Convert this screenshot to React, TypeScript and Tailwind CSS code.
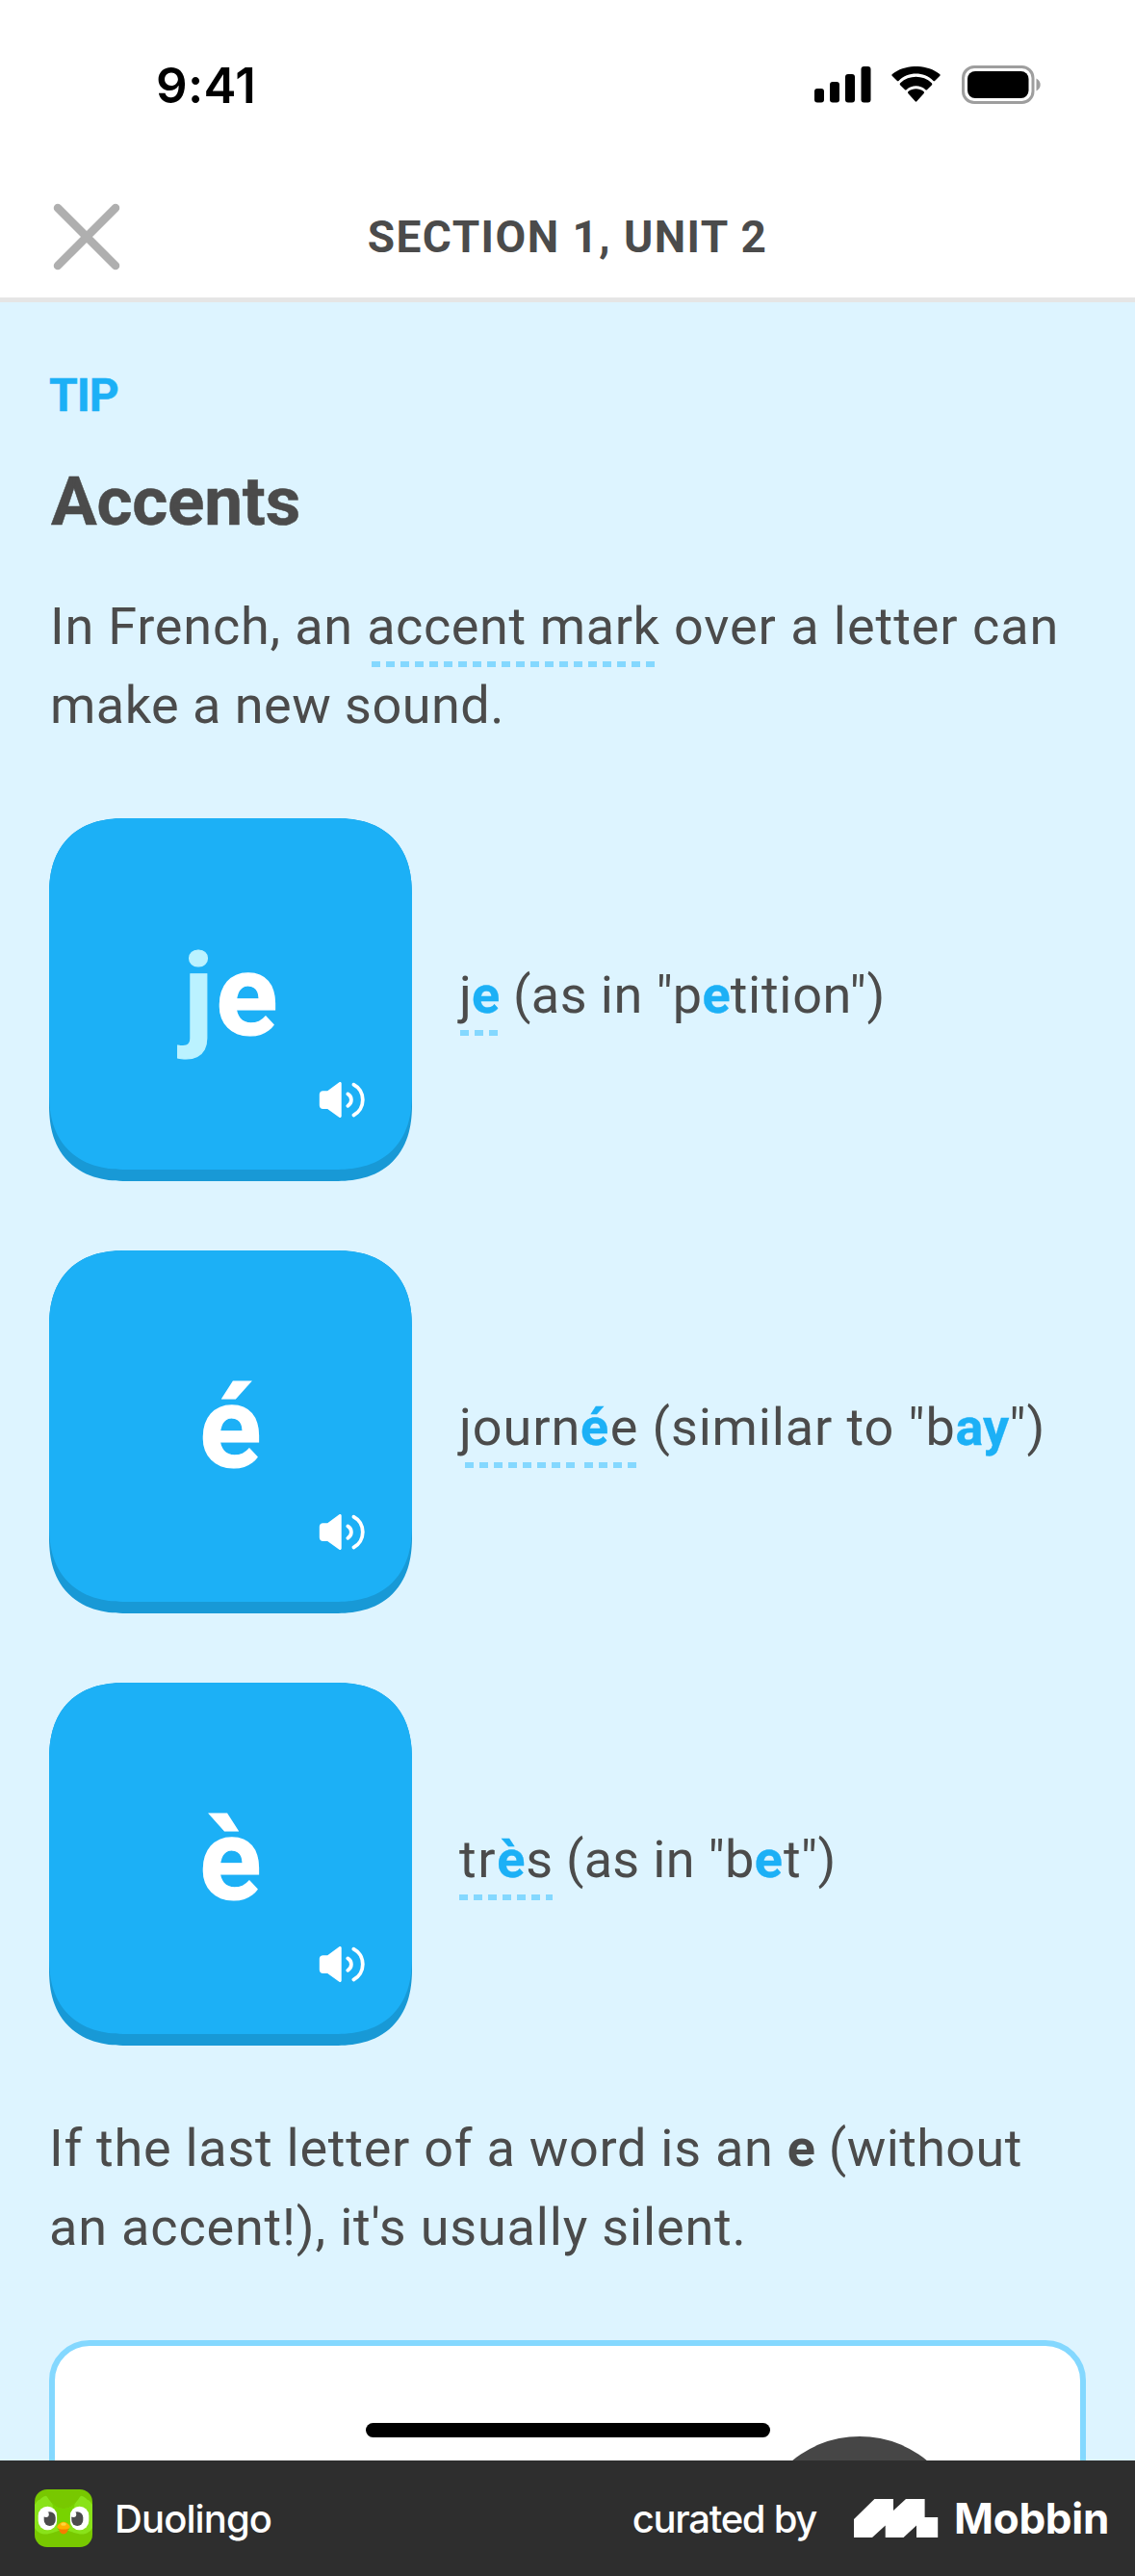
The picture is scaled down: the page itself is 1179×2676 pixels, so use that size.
import type { ReactNode } from "react";

function SignalIcon() {
  return (
    <svg width="59" height="38" viewBox="0 0 59 38" fill="#000">
      <rect x="0" y="23" width="10" height="14.5" rx="3" />
      <rect x="16" y="16" width="10" height="21.5" rx="3" />
      <rect x="32" y="8" width="10" height="29.5" rx="3" />
      <rect x="48.5" y="0" width="10" height="37.5" rx="3" />
    </svg>
  );
}

function WifiIcon() {
  return (
    <svg width="51" height="38" viewBox="0 0 51 38" fill="#000">
      <path d="M25.5 7.6c6.6 0 13 2.500 17.800 7.100a1.400 1.400 0 0 0 2 0l4.800-4.600a1.500 1.500 0 0 0 0-2.200C36.400-2.700 14.600-2.700.9 7.900a1.500 1.500 0 0 0 0 2.200l4.800 4.600a1.400 1.400 0 0 0 2 0C12.500 10.100 18.900 7.600 25.500 7.600z" />
      <path d="M25.500 20.200c3.600 0 7 1.300 9.700 3.700a1.400 1.400 0 0 0 2 0l4.600-4.500a1.500 1.500 0 0 0 0-2.200c-9.300-8.500-23.300-8.500-32.600 0a1.500 1.500 0 0 0 0 2.200l4.600 4.500a1.400 1.400 0 0 0 2 0c2.700-2.400 6.100-3.700 9.700-3.700z" />
      <path d="M33.500 28.200a1.500 1.500 0 0 0 0-2.200c-4.600-3.800-11.400-3.800-16 0a1.500 1.500 0 0 0 0 2.200l7 7.900a1.300 1.300 0 0 0 2 0z" />
    </svg>
  );
}

function BatteryIcon() {
  return (
    <svg width="83" height="40" viewBox="0 0 83 40">
      <rect x="1.500" y="1.500" width="72.500" height="37" rx="11.500" fill="none" stroke="#9e9e9e" strokeWidth="3" />
      <rect x="6" y="6" width="63.500" height="28" rx="8" fill="#000" />
      <path d="M77.500 13.500c2.600 1.200 4.200 3.700 4.200 6.500s-1.600 5.300-4.200 6.500z" fill="#9e9e9e" />
    </svg>
  );
}

function CloseIcon() {
  return (
    <svg width="70" height="70" viewBox="0 0 70 70" stroke="#afafaf" strokeWidth="8.500" strokeLinecap="round">
      <path d="M5 5l60 60M65 5L5 65" />
    </svg>
  );
}

function SpeakerIcon() {
  return (
    <svg width="49" height="40" viewBox="0 0 49 40" fill="none">
      <path
        d="M4.500 10.300h4.700L21.400 1.300c1-.7 2.300-.1 2.300 1.200v34c0 1.300-1.300 1.900-2.300 1.200L9.200 29H4.500C2.300 29 .8 27.500.8 25.300V14c0-2.200 1.500-3.700 3.700-3.700z"
        fill="#fff"
      />
      <path d="M30.300 13.400c2.200 1.300 3.600 3.600 3.600 6.200s-1.400 4.900-3.600 6.200" stroke="#fff" strokeWidth="3.800" strokeLinecap="round" />
      <path d="M36.400 3.700c5.600 2.800 9.400 8.900 9.400 15.900s-3.800 13.100-9.400 15.900" stroke="#fff" strokeWidth="3.800" strokeLinecap="round" />
    </svg>
  );
}

function OwlIcon() {
  return (
    <svg width="60" height="60" viewBox="0 0 60 60">
      <defs>
        <clipPath id="owl-clip">
          <rect width="60" height="60" rx="13" />
        </clipPath>
      </defs>
      <g clipPath="url(#owl-clip)">
        <rect width="60" height="60" fill="#78c800" />
        <path d="M0 16C2 13 3 11 5 11C7 9 9 7 12 6.700C16 11 19 20 30 20C41 20 44 11 48 6.700C51 7 53 9 55 11C57 11 58 13 60 16V40C57 46 50 47.500 45 46C39 45 35 42 30 42C25 42 21 45 15 46C10 47.500 3 46 0 40Z" fill="#89e219" />
        <path d="M18 13C21 18 25 20 30 20s9-2 12-7C40 24 37 30 36 42H24C23 30 20 24 18 13z" fill="#78d300" />
        <rect x="3.700" y="17.800" width="19.400" height="24.500" rx="9.600" fill="#fff" />
        <rect x="36.900" y="17.800" width="19.400" height="24.500" rx="9.600" fill="#fff" />
        <rect x="9.700" y="23.300" width="12" height="14.800" rx="6" fill="#4b4b4b" />
        <rect x="38.300" y="23.300" width="12" height="14.800" rx="6" fill="#4b4b4b" />
        <circle cx="11.800" cy="26" r="3" fill="#fff" />
        <circle cx="40.300" cy="26" r="3" fill="#fff" />
        <path d="M25 39.500h10c0 4-2.200 7-5 7s-5-3-5-7z" fill="#f47d00" />
        <path d="M30 33.700c3 0 6.700 3.400 6.700 5.200 0 2-3.700 2.600-6.700 2.600s-6.700-.6-6.700-2.600c0-1.800 3.700-5.200 6.700-5.200z" fill="#ffb100" />
        <ellipse cx="30" cy="36.200" rx="2.800" ry="1.600" fill="#ffd63c" />
      </g>
    </svg>
  );
}

function MobbinIcon() {
  return (
    <svg width="88" height="40" viewBox="0 0 88 40" fill="#fff">
      <path d="M0 21L21.400 0H41v12L54 0h19.600v19h13.600v21H65V27.500L51.500 40H32.700V27.500L19 40H0z" />
    </svg>
  );
}

/** Text with a row of light blue dashes below it. */
function Hint({ children, dashes, line = "" }: { children: ReactNode; dashes: string[]; line?: string }) {
  return (
    <span className={`relative inline-block ${line}`}>
      {children}
      {dashes.map((place) => (
        <span
          key={place}
          className={`absolute top-[77px] h-1.5 bg-[repeating-linear-gradient(90deg,#84d8ff_0_9px,transparent_9px_15px)] ${place}`}
        />
      ))}
    </span>
  );
}

function Hi({ children, className = "" }: { children: ReactNode; className?: string }) {
  return <b className={`font-bold text-[#1cb0f6] [-webkit-text-stroke:0.300px_currentColor] ${className}`}>{children}</b>;
}

function SoundRow({ letters, children }: { letters: ReactNode; children: ReactNode }) {
  return (
    <div className="flex items-center gap-[49px]">
      <button className="relative flex h-[377px] w-[377px] shrink-0 items-center justify-center rounded-[72px] bg-[#1899d6] supports-[corner-shape:squircle]:rounded-[80px] supports-[corner-shape:squircle]:[corner-shape:superellipse(1.25)]">
        <span className="absolute inset-x-0 top-0 flex h-[365px] items-center justify-center rounded-[72px] bg-[#1cb0f6] pt-[5px] text-[119px] leading-[120px] font-bold text-white [-webkit-text-stroke:1.200px_currentColor] supports-[corner-shape:squircle]:rounded-[80px] supports-[corner-shape:squircle]:[corner-shape:superellipse(1.25)]">
          {letters}
        </span>
        <span className="absolute top-[273px] left-[280px]">
          <SpeakerIcon />
        </span>
      </button>
      <p className="pb-2.5 whitespace-pre">{children}</p>
    </div>
  );
}

export default function App() {
  return (
    <div className="flex h-[2676px] w-[1179px] flex-col overflow-hidden bg-white font-[Roboto,sans-serif] text-[#4b4b4b]">
      <div className="flex h-44 shrink-0 items-center justify-between pr-[97px] pl-[162px]">
        <span className="font-[Inter,sans-serif] text-[51px] leading-none font-semibold tracking-[0.3px] text-black">9:41</span>
        <div className="flex items-center">
          <SignalIcon />
          <span className="ml-[21px]">
            <WifiIcon />
          </span>
          <span className="ml-[22px]">
            <BatteryIcon />
          </span>
        </div>
      </div>

      <header className="grid h-[138px] shrink-0 grid-cols-[125px_1fr_125px] items-center border-b-5 border-[#e5e5e5] pt-[7px]">
        <button className="flex justify-end">
          <CloseIcon />
        </button>
        <h1 className="text-center text-[46px] leading-none font-bold tracking-[1.450px] whitespace-nowrap">SECTION 1, UNIT 2</h1>
      </header>

      <main className="relative h-[2242px] shrink-0 overflow-hidden bg-[#ddf4ff] px-[51px] pt-[73px] text-[54px] leading-[82px]">
        <h2 className="text-[48px] leading-none font-bold tracking-[-1px] text-[#1cb0f6] [-webkit-text-stroke:0.500px_currentColor]">TIP</h2>
        <h3 className="mt-[50px] pl-0.5 text-[71px] leading-[72px] font-bold tracking-[-0.200px] [-webkit-text-stroke:0.500px_currentColor]">Accents</h3>

        <p className="mt-[53px] pl-px whitespace-pre">
          <span className="tracking-[0.800px]">In French, an </span>
          <Hint dashes={["left-[5px] w-[294px]"]} line="tracking-[0.600px]">accent mark</Hint>
          <span className="tracking-[0.950px]"> over a letter can</span>
          <br />
          <span className="tracking-[0.480px]">make a new sound.</span>
        </p>

        <div className="mt-[76px] flex flex-col gap-[72px]">
          <SoundRow
            letters={
              <>
                <span className="tracking-[3px] text-[#bbf2ff]">j</span>e
              </>
            }
          >
            <Hint dashes={["left-px w-[39px]"]}>
              j<Hi>e</Hi>
            </Hint>
            <span className="tracking-[0.450px]"> (as in "p</span>
            <Hi>e</Hi>
            <span className="tracking-[0.700px]">tition")</span>
          </SoundRow>
          <SoundRow letters="é">
            <Hint dashes={["left-1.5 w-[114px]", "left-[130px] w-[54px]"]} line="tracking-[0.900px]">
              journ<Hi className="tracking-[1.500px]">é</Hi>e
            </Hint>
            <span className="tracking-[0.850px]"> (similar to "b</span>
            <Hi>ay</Hi>
            <span className="tracking-[1px]">")</span>
          </SoundRow>
          <SoundRow letters="è">
            <Hint dashes={["left-0 w-[97px]"]}>
              <span className="tracking-[1.600px]">tr</span>
              <Hi className="tracking-[1px]">è</Hi>s
            </Hint>
            <span className="tracking-[0.300px]"> (as in "b</span>
            <Hi className="tracking-[1px]">e</Hi>
            <span className="tracking-[0.300px]">t")</span>
          </SoundRow>
        </div>

        <p className="mt-[66px] whitespace-pre">
          <span className="tracking-[0.740px]">If the last letter of a word is an </span>
          <b>e</b>
          <span className="tracking-[0.400px]"> (without</span>
          <br />
          <span className="tracking-[0.830px]">an accent!), it's usually silent.</span>
        </p>

        <div className="relative mt-[76px] h-[300px] rounded-[42px] border-6 border-[#84d8ff] bg-white">
          <div className="absolute top-[94px] left-[726px] h-[220px] w-[220px] rounded-full bg-[#464646]" />
        </div>
        <div className="absolute bottom-6 left-[380px] h-[15px] w-[420px] rounded-full bg-black" />
      </main>

      <footer className="flex h-[120px] shrink-0 items-center bg-[#2e2e2e] pr-[27px] pl-9 font-[Inter,sans-serif] text-[40px] leading-none font-medium text-white">
        <OwlIcon />
        <span className="ml-[23px] pt-0.5 tracking-[-0.900px]">Duolingo</span>
        <div className="ml-auto flex items-center">
          <span className="pt-0.5 tracking-[-1.300px]">curated by</span>
          <span className="ml-[39px]">
            <MobbinIcon />
          </span>
          <span className="ml-4 text-[44px] font-bold tracking-[-0.300px]">Mobbin</span>
        </div>
      </footer>
    </div>
  );
}
